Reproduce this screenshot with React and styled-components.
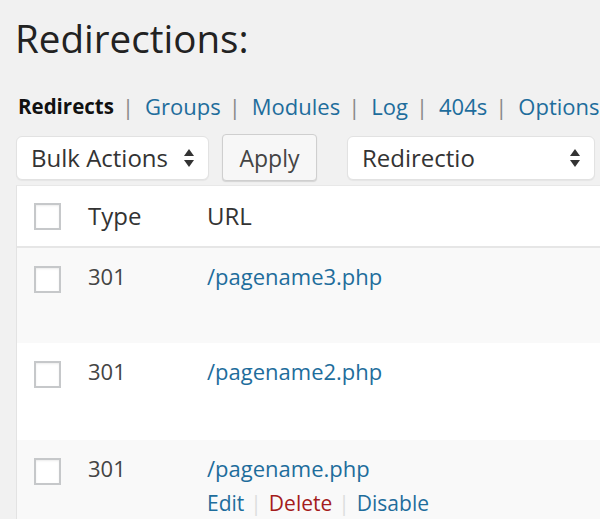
import React from 'react';
import styled, { createGlobalStyle } from 'styled-components'

const GlobalStyle = createGlobalStyle`
     body {
          margin:0;
          background:#f1f1f1;
          font-family:'Open Sans', 'Noto Sans', sans-serif;
          color:#444;
          overflow:hidden;
     }
`

const Page = styled.div`
     padding-left:16px;
     width:700px;
`

const Title = styled.h2`
     margin:15px 0 0 -1px;
     font-size:38.6px;
     line-height:46px;
     font-weight:400;
     color:#222;
`

const SubNav = styled.ul`
     list-style:none;
     margin:30px 0 0 2px;
     padding:0;
     display:flex;
     align-items:center;
     font-size:22px;
     line-height:30px;
`

const NavItem = styled.li`
     display:flex;
     align-items:center;
`

const NavLink = styled.a`
     color:${props => props.current ? '#111' : '#1e6d9c'};
     font-weight:${props => props.current ? 700 : 400};
     font-size:${props => props.current ? '20.5px' : 'inherit'};
     text-decoration:none;
`

const NavSep = styled.span`
     margin:0 11px 0 8px;
     color:#8a8a8a;
`

const Toolbar = styled.div`
     display:flex;
     align-items:center;
     margin-top:12px;
     height:49px;
`

const Select = styled.div`
     box-sizing:border-box;
     width:${props => props.width}px;
     height:44px;
     margin-right:${props => props.gap || 0}px;
     padding:0 13px 0 14px;
     display:flex;
     align-items:center;
     justify-content:space-between;
     background:#fff;
     border:1px solid #e2e2e2;
     border-radius:6px;
     box-shadow:0 1px 1px rgba(0,0,0,.05);
     font-size:24px;
     color:#333;
`

const Button = styled.button`
     box-sizing:border-box;
     width:95px;
     height:47px;
     margin-right:30px;
     background:#f7f7f7;
     border:1px solid #cfcfcf;
     border-radius:4px;
     box-shadow:0 1px 1px rgba(0,0,0,.12);
     font-family:'Open Sans', sans-serif;
     font-size:23px;
     color:#444;
     padding:0;
`

const Table = styled.div`
     margin-top:3px;
     background:#fff;
     border-left:1px solid #e3e3e3;
     border-top:1px solid #e8e8e8;
`

const Row = styled.div`
     display:grid;
     grid-template-columns:71px 119px 1fr;
     align-items:${props => props.head ? 'center' : 'start'};
     height:${props => props.height}px;
     box-sizing:border-box;
     padding-top:${props => props.head ? 0 : 13}px;
     background:${props => props.alt ? '#f9f9f9' : '#fff'};
     border-bottom:${props => props.head ? '2px solid #e6e6e6' : 'none'};
`

const Check = styled.span`
     display:block;
     box-sizing:border-box;
     width:27px;
     height:27px;
     margin-left:17px;
     margin-top:${props => props.head ? 0 : 5}px;
     background:#fff;
     border:2px solid #c6c8ca;
     box-shadow:inset 0 1px 2px rgba(0,0,0,.08);
`

const HeadCell = styled.div`
     font-size:24px;
     color:#333;
     line-height:30px;
`

const Cell = styled.div`
     font-size:22px;
     line-height:30px;
     color:#444;
`

const UrlLink = styled.a`
     color:#1e6d9c;
     text-decoration:none;
`

const Actions = styled.div`
     margin-top:5px;
     font-size:21px;
     line-height:30px;
     display:flex;
     align-items:center;
`

const ActionLink = styled.a`
     color:${props => props.danger ? '#a41c1c' : '#1e6d9c'};
     text-decoration:none;
`

const ActionSep = styled.span`
     color:#ddd;
     margin:0 7px 0 6px;
`

const Arrows = () => (
     <svg width="12" height="20" viewBox="0 0 12 20">
          <path d="M6 1 L11 8 L1 8 Z" fill="#333" />
          <path d="M6 19 L11 12 L1 12 Z" fill="#333" />
     </svg>
)

const tabs = ['Redirects', 'Groups', 'Modules', 'Log', '404s', 'Options']

const rows = [
     { type: '301', url: '/pagename3.php', height: 95 },
     { type: '301', url: '/pagename2.php', height: 97 },
     { type: '301', url: '/pagename.php', height: 90, actions: true },
]

const App = () => {
     return (
          <Page>
               <GlobalStyle />
               <Title>Redirections:</Title>
               <SubNav>
                    {tabs.map((t, i) => (
                         <NavItem key={t}>
                              <NavLink href="#" current={i === 0}>{t}</NavLink>
                              {i < tabs.length - 1 && <NavSep>|</NavSep>}
                         </NavItem>
                    ))}
               </SubNav>
               <Toolbar>
                    <Select width={193} gap={13}>Bulk Actions <Arrows /></Select>
                    <Button>Apply</Button>
                    <Select width={248}>Redirectio <Arrows /></Select>
               </Toolbar>
               <Table>
                    <Row head height={62}>
                         <Check head />
                         <HeadCell>Type</HeadCell>
                         <HeadCell>URL</HeadCell>
                    </Row>
                    {rows.map((r, i) => (
                         <Row key={r.url} alt={i % 2 === 0} height={r.height}>
                              <Check />
                              <Cell>{r.type}</Cell>
                              <Cell>
                                   <UrlLink href="#">{r.url}</UrlLink>
                                   {r.actions && (
                                        <Actions>
                                             <ActionLink href="#">Edit</ActionLink>
                                             <ActionSep>|</ActionSep>
                                             <ActionLink href="#" danger>Delete</ActionLink>
                                             <ActionSep>|</ActionSep>
                                             <ActionLink href="#">Disable</ActionLink>
                                        </Actions>
                                   )}
                              </Cell>
                         </Row>
                    ))}
               </Table>
          </Page>
     )
}

export default App
